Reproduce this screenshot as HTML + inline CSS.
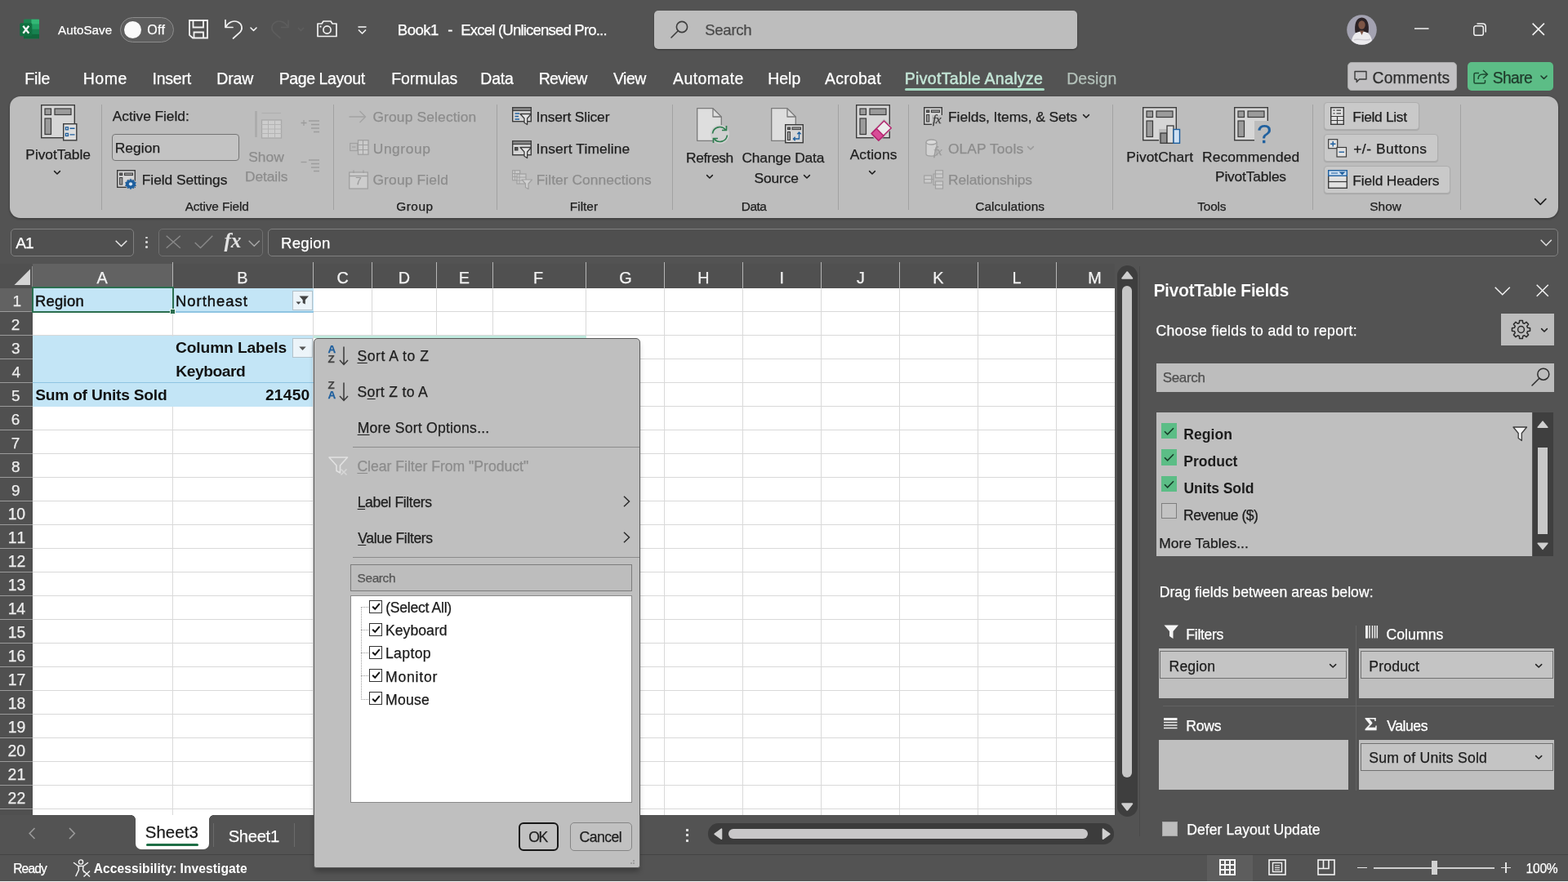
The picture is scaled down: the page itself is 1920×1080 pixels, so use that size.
<!DOCTYPE html>
<html lang="en">
<head>
<meta charset="utf-8">
<title>Book1 - Excel</title>
<style>
*{box-sizing:border-box;margin:0;padding:0}
html,body{width:1920px;height:1080px;overflow:hidden;background:#535353}
body{font-family:"Liberation Sans",sans-serif;color:#fff;position:relative;font-size:18px}
.t{position:absolute;white-space:pre;line-height:normal;-webkit-text-stroke:0.25px currentColor}
#app{position:absolute;left:0;top:0;width:1920px;height:1080px;will-change:transform}
.t u{text-decoration:underline;text-decoration-thickness:1px;text-underline-offset:2px}
svg{position:absolute;overflow:visible}
.sep{position:absolute;width:1px;background:#a2a2a2}
</style>
</head>
<body>
<div id="app">
<!-- p_title -->
<div id="titlebar">
<svg style="left:23px;top:23px;" width="26" height="26" viewBox="0 0 26 26">
<rect x="6" y="0.7" width="19" height="23.6" rx="1.8" fill="#1f9a5e"/>
<rect x="6" y="0.7" width="9.5" height="6" fill="#1c8451"/>
<rect x="15.5" y="0.7" width="9.5" height="6" fill="#33b876" />
<rect x="6" y="6.7" width="9.5" height="6" fill="#13703f"/>
<rect x="15.5" y="6.7" width="9.5" height="6" fill="#21a063"/>
<rect x="6" y="12.7" width="9.5" height="6" fill="#0e5a33"/>
<rect x="15.5" y="12.7" width="9.5" height="6" fill="#178150"/>
<rect x="6" y="18.7" width="19" height="5.6" fill="#10673c"/>
<rect x="1.300" y="5.300" width="15" height="16" rx="1.5" fill="#107040"/>
<path d="M5.300 8.800 L12.300 17.800 M12.300 8.800 L5.300 17.800" stroke="#f4f4f4" stroke-width="2.300" fill="none"/>
</svg>
<span class="t" style="left:70.97px;top:27.50px;font-size:15.2px;letter-spacing:0.041px;color:#ffffff;">AutoSave</span>
<div style="position:absolute;left:147px;top:21px;width:66px;height:30.5px;border:1.3px solid #8d8d8d;border-radius:16px;background:#5e5e5e"></div>
<div style="position:absolute;left:152px;top:25.5px;width:21px;height:21px;border-radius:50%;background:#fbfbfb"></div>
<span class="t" style="left:180.25px;top:27.80px;font-size:16px;letter-spacing:0.335px;color:#ffffff;">Off</span>
<svg style="left:231px;top:24px;" width="24" height="24" viewBox="0 0 24 24"><path d="M1 1 H23 V22.500 H5 L1 18.800 Z" fill="none" stroke="#f2f2f2" stroke-width="1.8" stroke-linejoin="miter"/>
<path d="M5.500 1 V9.500 H18 V1 M6.500 22.500 V15.500 H18 V22.500" fill="none" stroke="#f2f2f2" stroke-width="1.8"/></svg>
<svg style="left:274px;top:23px;" width="24" height="25" viewBox="0 0 24 25"><path d="M2 1.5 V10.5 H11" fill="none" stroke="#f2f2f2" stroke-width="1.7" stroke-linecap="round" stroke-linejoin="round"/>
<path d="M2.5 10 C6 4 12 1.5 17.5 4 C22.5 6.5 23.5 12.5 20 16.5 L11.5 24" fill="none" stroke="#f2f2f2" stroke-width="1.7" stroke-linecap="round"/></svg>
<svg style="left:306px;top:33px;" width="9" height="6" viewBox="0 0 9 6"><path d="M1 1 L4.5 4.5 L8 1" fill="none" stroke="#f2f2f2" stroke-width="1.6" stroke-linecap="round" stroke-linejoin="round"/></svg>
<svg style="left:331px;top:23px;" width="24" height="25" viewBox="0 0 24 25"><path d="M22 1.5 V10.5 H13" fill="none" stroke="#5d5d5d" stroke-width="1.7"/>
<path d="M21.5 10 C18 4 12 1.5 6.5 4 C1.5 6.5 0.5 12.5 4 16.5 L12.5 24" fill="none" stroke="#5d5d5d" stroke-width="1.7"/></svg>
<svg style="left:364px;top:33px;" width="9" height="6" viewBox="0 0 9 6"><path d="M1 1 L4.5 4.5 L8 1" fill="none" stroke="#5d5d5d" stroke-width="1.6"/></svg>
<svg style="left:388px;top:25px;" width="25" height="21" viewBox="0 0 25 21"><path d="M1 4 H6 L8 1 H17 L19 4 H24 V19.5 H1 Z" fill="none" stroke="#f2f2f2" stroke-width="1.7" stroke-linejoin="round"/>
<circle cx="12.5" cy="11.5" r="4.6" fill="none" stroke="#f2f2f2" stroke-width="1.7"/><rect x="3.5" y="6.5" width="2" height="2" fill="#f2f2f2"/></svg>
<svg style="left:438px;top:32px;" width="11" height="10" viewBox="0 0 11 10"><path d="M0.5 1 H10.5" stroke="#f2f2f2" stroke-width="1.6"/><path d="M1 4.5 L5.5 9 L10 4.5" fill="none" stroke="#f2f2f2" stroke-width="1.6" stroke-linejoin="round"/></svg>
<span class="t" style="left:486.77px;top:26.00px;font-size:18.6px;letter-spacing:-0.530px;color:#ffffff;">Book1</span>
<span class="t" style="left:548.18px;top:26.00px;font-size:18.6px;letter-spacing:0.000px;color:#ffffff;">-</span>
<span class="t" style="left:564.27px;top:26.00px;font-size:18.6px;letter-spacing:-0.829px;color:#ffffff;">Excel (Unlicensed Pro...</span>
<div style="position:absolute;left:801px;top:12.5px;width:517.5px;height:47.5px;background:#bdbdbd;border-radius:5px;box-shadow:0 1px 2px rgba(0,0,0,.35)"></div>
<svg style="left:821px;top:25px;" width="22" height="22" viewBox="0 0 22 22"><circle cx="14" cy="8" r="6.6" fill="none" stroke="#3d3d3d" stroke-width="1.6"/><path d="M9.3 12.7 L1 21" stroke="#3d3d3d" stroke-width="1.6" stroke-linecap="round"/></svg>
<span class="t" style="left:863.16px;top:26.00px;font-size:18.6px;letter-spacing:-0.281px;color:#4a4a4a;">Search</span>
<svg style="left:1649px;top:17.5px;" width="37" height="37" viewBox="0 0 37 37"><defs><clipPath id="av"><circle cx="18.5" cy="18.5" r="18.300"/></clipPath></defs>
<g clip-path="url(#av)"><rect width="37" height="37" fill="#a3a2b1"/>
<path d="M10.500 22 C9 12 11.500 3.500 18.500 3.500 C25.500 3.500 28 12 26.500 22 Z" fill="#2b2226"/>
<ellipse cx="18.500" cy="12.500" rx="4.200" ry="5.200" fill="#7d5546"/>
<path d="M5.500 37 C6 25 10.500 20.500 18.500 20.500 C26.500 20.500 31 25 31.500 37 Z" fill="#ecebee"/>
<path d="M16 19.500 L18.500 25 L21 19.500 Z" fill="#7d5546"/>
<path d="M9 31 C14 28.500 23 33 29 30" fill="none" stroke="#cfcdd4" stroke-width="1.500"/></g></svg>
<svg style="left:1731.5px;top:33.7px;" width="18" height="2" viewBox="0 0 18 2"><path d="M0 1 H17.5" stroke="#f2f2f2" stroke-width="1.5"/></svg>
<svg style="left:1804px;top:28px;" width="16" height="16" viewBox="0 0 16 16"><rect x="0.8" y="3.800" width="11.500" height="11.500" rx="2.300" fill="none" stroke="#f2f2f2" stroke-width="1.5"/><path d="M4.500 0.9 H11.500 Q15.200 0.9 15.200 4.600 V11.500" fill="none" stroke="#f2f2f2" stroke-width="1.5"/></svg>
<svg style="left:1876.3px;top:28.3px;" width="15.5" height="15.5" viewBox="0 0 15.5 15.5"><path d="M0.6 0.6 L14.900 14.900 M14.900 0.6 L0.6 14.900" stroke="#f2f2f2" stroke-width="1.6"/></svg>
</div>
<div id="tabs">
<span class="t" style="left:30.20px;top:84.50px;font-size:19.5px;letter-spacing:-0.087px;color:#ffffff;">File</span>
<span class="t" style="left:101.70px;top:84.50px;font-size:19.5px;letter-spacing:0.548px;color:#ffffff;">Home</span>
<span class="t" style="left:186.51px;top:84.50px;font-size:19.5px;letter-spacing:-0.228px;color:#ffffff;">Insert</span>
<span class="t" style="left:265.20px;top:84.50px;font-size:19.5px;letter-spacing:-0.087px;color:#ffffff;">Draw</span>
<span class="t" style="left:341.70px;top:84.50px;font-size:19.5px;letter-spacing:-0.407px;color:#ffffff;">Page Layout</span>
<span class="t" style="left:479.20px;top:84.50px;font-size:19.5px;letter-spacing:-0.038px;color:#ffffff;">Formulas</span>
<span class="t" style="left:588.20px;top:84.50px;font-size:19.5px;letter-spacing:-0.136px;color:#ffffff;">Data</span>
<span class="t" style="left:659.70px;top:84.50px;font-size:19.5px;letter-spacing:-0.839px;color:#ffffff;">Review</span>
<span class="t" style="left:750.92px;top:84.50px;font-size:19.5px;letter-spacing:-0.464px;color:#ffffff;">View</span>
<span class="t" style="left:823.96px;top:84.50px;font-size:19.5px;letter-spacing:0.419px;color:#ffffff;">Automate</span>
<span class="t" style="left:940.20px;top:84.50px;font-size:19.5px;letter-spacing:-0.001px;color:#ffffff;">Help</span>
<span class="t" style="left:1009.96px;top:84.50px;font-size:19.5px;letter-spacing:0.245px;color:#ffffff;">Acrobat</span>
<span class="t" style="left:1107.70px;top:84.50px;font-size:19.5px;letter-spacing:0.322px;color:#c3e5d6;-webkit-text-stroke:0.45px #c3e5d6;">PivotTable Analyze</span>
<div style="position:absolute;left:1108px;top:107.8px;width:171px;height:3px;background:#a6d8c1;border-radius:2px"></div>
<span class="t" style="left:1306.20px;top:84.50px;font-size:19.5px;letter-spacing:0.070px;color:#b3c0b9;">Design</span>
<div style="position:absolute;left:1650px;top:76.2px;width:134px;height:35.3px;background:#c2c1c3;border-radius:5px;border:1px solid #a9a9a9"></div>
<svg style="left:1658px;top:86px;" width="16" height="16" viewBox="0 0 16 16"><path d="M1 1.5 H15 V11 H6.5 L3.2 14.5 V11 H1 Z" fill="none" stroke="#3a3a3a" stroke-width="1.4" stroke-linejoin="round"/></svg>
<span class="t" style="left:1680.54px;top:84.50px;font-size:19.3px;letter-spacing:0.193px;color:#2e2e2e;">Comments</span>
<div style="position:absolute;left:1797px;top:76.2px;width:105px;height:35.3px;background:#5cbd86;border-radius:5px"></div>
<svg style="left:1804px;top:85px;" width="19" height="18" viewBox="0 0 19 18"><path d="M7 4.5 H2.5 Q1 4.500 1 6 V15.5 Q1 17 2.500 17 H13 Q14.5 17 14.5 15.5 V13" fill="none" stroke="#1d4a31" stroke-width="1.5"/><path d="M12 1 L17.5 6 L12 11 M17 6 H11.500 Q6 6 6 12" fill="none" stroke="#1d4a31" stroke-width="1.5" stroke-linejoin="round"/></svg>
<span class="t" style="left:1827.63px;top:84.50px;font-size:19.3px;letter-spacing:-0.570px;color:#1f3a2b;">Share</span>
<svg style="left:1886px;top:92px;" width="9" height="6" viewBox="0 0 9 6"><path d="M1 1 L4.5 4.5 L8 1" fill="none" stroke="#1f3a2b" stroke-width="1.6" stroke-linecap="round" stroke-linejoin="round"/></svg>
</div>
<!-- p_ribbon -->
<div id="ribbon">
<div style="position:absolute;left:12px;top:118px;width:1896px;height:149px;background:#bdbdbd;border-radius:13px;box-shadow:0 1px 3px rgba(0,0,0,.4)"></div>
<div class="sep" style="left:124px;top:128px;height:129px"></div>
<div class="sep" style="left:408px;top:128px;height:129px"></div>
<div class="sep" style="left:608px;top:128px;height:129px"></div>
<div class="sep" style="left:823px;top:128px;height:129px"></div>
<div class="sep" style="left:1026px;top:128px;height:129px"></div>
<div class="sep" style="left:1112px;top:128px;height:129px"></div>
<div class="sep" style="left:1362px;top:128px;height:129px"></div>
<div class="sep" style="left:1607px;top:128px;height:129px"></div>
<div class="sep" style="left:1788px;top:128px;height:129px"></div>
<svg style="left:50.3px;top:128.2px;opacity:1" width="42" height="41.5" viewBox="0 0 42 41.5"><rect x="0.7" y="0.7" width="40.6" height="40" fill="#d6d6d6" stroke="#3b3b3b" stroke-width="1.4"/>
<rect x="5" y="5" width="7.5" height="7.5" fill="#9b9b9b" stroke="#3b3b3b" stroke-width="1.2"/>
<rect x="17" y="5" width="20" height="7.500" fill="#9b9b9b" stroke="#3b3b3b" stroke-width="1.2"/>
<rect x="5" y="17" width="7.5" height="19.500" fill="#9b9b9b" stroke="#3b3b3b" stroke-width="1.2"/></svg>
<svg style="left:77.4px;top:150.8px;" width="17.5" height="21.5" viewBox="0 0 17.5 21.5"><rect x="0.7" y="0.7" width="16.1" height="20.1" fill="#dedede" stroke="#3b3b3b" stroke-width="1.4"/>
<rect x="3.4" y="4.8" width="3" height="3" fill="none" stroke="#1e5f9e" stroke-width="1.3"/><rect x="3.4" y="12.400" width="3" height="3" fill="none" stroke="#1e5f9e" stroke-width="1.3"/>
<path d="M8.5 6.3 H14.5 M8.5 13.9 H14.5" stroke="#1e5f9e" stroke-width="1.4"/></svg>
<span class="t" style="left:31.37px;top:178.50px;font-size:17.4px;letter-spacing:-0.076px;color:#1e1e1e;">PivotTable</span>
<svg style="left:66.2px;top:209.3px;" width="8" height="4.6" viewBox="0 0 8 4.6"><path d="M0.6 0.6 L4 4 L7.4 0.6" fill="none" stroke="#1e1e1e" stroke-width="1.5" stroke-linecap="round" stroke-linejoin="round"/></svg>
<span class="t" style="left:137.77px;top:132.00px;font-size:17.4px;letter-spacing:-0.063px;color:#1e1e1e;">Active Field:</span>
<div style="position:absolute;left:137px;top:164.3px;width:156px;height:32.4px;border:1px solid #747474;border-radius:4px;background:#c3c3c3"></div>
<span class="t" style="left:140.67px;top:171.00px;font-size:17.4px;letter-spacing:0.081px;color:#1e1e1e;">Region</span>
<svg style="left:143.3px;top:208.3px;" width="24" height="24" viewBox="0 0 24 24"><rect x="0.7" y="0.7" width="21.6" height="20.6" fill="#d6d6d6" stroke="#3b3b3b" stroke-width="1.4"/>
<rect x="3.6" y="4" width="3.2" height="2.600" fill="#666" stroke="#3b3b3b" stroke-width="1"/><rect x="9.5" y="4" width="10" height="2.6" fill="#999" stroke="#3b3b3b" stroke-width="1"/>
<rect x="3.6" y="9.5" width="3.2" height="8.5" fill="#999" stroke="#3b3b3b" stroke-width="1"/>
<circle cx="17" cy="17.3" r="6.8" fill="#bdbdbd"/>
<path d="M17 10.8 l1.6 1.9 2.4-.7 .6 2.400 2.300 .9 -1.100 2.200 1.100 2.200 -2.300 .9 -.600 2.400 -2.400-.7 -1.600 1.900 -1.600-1.900 -2.400 .7 -.600-2.400 -2.300-.900 1.100-2.200 -1.100-2.200 2.300-.900 .600-2.400 2.400 .7z" fill="#1e5f9e"/>
<circle cx="17" cy="17.3" r="2.1" fill="#d9e6f2"/></svg>
<span class="t" style="left:173.77px;top:210.00px;font-size:17.4px;letter-spacing:-0.059px;color:#1e1e1e;">Field Settings</span>
<span class="t" style="left:226.67px;top:243.50px;font-size:15.4px;letter-spacing:-0.134px;color:#1e1e1e;">Active Field</span>
<svg style="left:310px;top:134.5px;" width="36" height="40" viewBox="0 0 36 40"><path d="M3.5 1 V33" stroke="#a9a9a9" stroke-width="2.4"/>
<rect x="10.500" y="12" width="24" height="22" fill="#cdcdcd" stroke="#a9a9a9" stroke-width="1.3"/>
<path d="M10.5 17.5 H34.5 M10.5 23 H34.5 M10.5 28.5 H34.5 M18.500 12 V34 M26.500 12 V34" stroke="#b4b4b4" stroke-width="1"/>
<path d="M10.5 3.5 H34" stroke="#b0b0b0" stroke-width="1.2"/></svg>
<span class="t" style="left:304.22px;top:181.50px;font-size:17.4px;letter-spacing:0.003px;color:#8c8c8c;">Show</span>
<span class="t" style="left:300.07px;top:206.00px;font-size:17.4px;letter-spacing:-0.139px;color:#8c8c8c;">Details</span>
<svg style="left:368px;top:145.5px;" width="24" height="17" viewBox="0 0 24 17"><path d="M0.5 4.5 H7.5 M4 1 V8" stroke="#9d9d9d" stroke-width="1.3"/><path d="M10 2 H23 M13 6.500 H23 M13 11 H23 M16 15.500 H23" stroke="#9d9d9d" stroke-width="1.5"/></svg>
<svg style="left:368px;top:193.5px;" width="24" height="17" viewBox="0 0 24 17"><path d="M0.5 4.5 H7.5" stroke="#9d9d9d" stroke-width="1.3"/><path d="M10 2 H23 M13 6.500 H23 M13 11 H23 M16 15.500 H23" stroke="#9d9d9d" stroke-width="1.5"/></svg>
<svg style="left:426.5px;top:134.5px;" width="22" height="16" viewBox="0 0 22 16"><path d="M0.5 8 H20.5 M13.5 1 L20.5 8 L13.5 15" fill="none" stroke="#a3a3a3" stroke-width="1.4"/></svg>
<span class="t" style="left:456.43px;top:133.00px;font-size:17.4px;letter-spacing:0.151px;color:#8c8c8c;">Group Selection</span>
<svg style="left:427.5px;top:171px;" width="24" height="19" viewBox="0 0 24 19"><rect x="0.7" y="4.5" width="9" height="9" fill="none" stroke="#a0a0a0" stroke-width="1.2"/><path d="M3 9 H7.5" stroke="#a0a0a0" stroke-width="1.2"/>
<rect x="10.5" y="0.7" width="12.5" height="17.5" fill="#cbcbcb" stroke="#a0a0a0" stroke-width="1.3"/><path d="M10.5 6.500 H23 M10.5 12.500 H23 M16.5 0.7 V18" stroke="#a0a0a0" stroke-width="1.1"/></svg>
<span class="t" style="left:456.76px;top:172.00px;font-size:17.4px;letter-spacing:0.568px;color:#8c8c8c;">Ungroup</span>
<svg style="left:427px;top:208px;" width="24" height="24" viewBox="0 0 24 24"><rect x="0.7" y="3" width="22.6" height="20" fill="#cdcdcd" stroke="#a0a0a0" stroke-width="1.3"/><path d="M0.7 7.500 H23.3 M6 0.5 V4 M18 0.5 V4" stroke="#a0a0a0" stroke-width="1.3"/></svg>
<span class="t" style="left:435.31px;top:214.00px;font-size:13.5px;letter-spacing:0.000px;color:#9c9c9c;">7</span>
<span class="t" style="left:456.43px;top:210.00px;font-size:17.4px;letter-spacing:0.158px;color:#8c8c8c;">Group Field</span>
<span class="t" style="left:485.23px;top:243.50px;font-size:15.4px;letter-spacing:0.526px;color:#1e1e1e;">Group</span>
<svg style="left:627.3px;top:130.7px;" width="24" height="23" viewBox="0 0 24 23"><rect x="0.7" y="0.7" width="22.6" height="17" fill="#d6d6d6" stroke="#3b3b3b" stroke-width="1.4"/><rect x="0.7" y="0.7" width="22.6" height="3.800" fill="#8a8a8a" stroke="#3b3b3b" stroke-width="1.2"/><path d="M3.5 8 H9 M3.5 11.5 H8 M3.5 15 H9" stroke="#1e5f9e" stroke-width="1.4"/><path d="M10 8.5 H23.5 L18.600 14 V21.5 L15 19.300 V14 Z" fill="#e6e6e6" stroke="#3b3b3b" stroke-width="1.3" stroke-linejoin="round"/></svg>
<span class="t" style="left:656.50px;top:133.00px;font-size:17.4px;letter-spacing:-0.157px;color:#1e1e1e;">Insert Slicer</span>
<svg style="left:627.3px;top:171.5px;" width="24" height="23" viewBox="0 0 24 23"><rect x="0.7" y="0.7" width="22.6" height="17" fill="#d6d6d6" stroke="#3b3b3b" stroke-width="1.4"/><rect x="0.7" y="0.7" width="22.6" height="3.800" fill="#8a8a8a" stroke="#3b3b3b" stroke-width="1.2"/><rect x="3.5" y="8.5" width="3.5" height="3.500" fill="#555" stroke="#3b3b3b" stroke-width="1"/><path d="M10 8.5 H23.5 L18.600 14 V21.5 L15 19.300 V14 Z" fill="#e6e6e6" stroke="#3b3b3b" stroke-width="1.3" stroke-linejoin="round"/></svg>
<span class="t" style="left:656.50px;top:172.00px;font-size:17.4px;letter-spacing:0.116px;color:#1e1e1e;">Insert Timeline</span>
<svg style="left:627px;top:208px;" width="25" height="24" viewBox="0 0 25 24"><rect x="0.7" y="0.7" width="9" height="12" fill="#cbcbcb" stroke="#a0a0a0" stroke-width="1.2"/><rect x="6" y="5" width="11" height="12" fill="#cbcbcb" stroke="#a0a0a0" stroke-width="1.2"/><path d="M3.5 0.7 V12.500 M0.7 4.500 H9.7 M0.7 8.500 H6 M9 5 V17 M6 9 H17 M6 13 H12" stroke="#a0a0a0" stroke-width="1"/>
<path d="M12 12 H24.500 L20 17 V23.5 L16.500 21.5 V17 Z" fill="#d0d0d0" stroke="#a0a0a0" stroke-width="1.2" stroke-linejoin="round"/></svg>
<span class="t" style="left:656.67px;top:210.00px;font-size:17.4px;letter-spacing:0.054px;color:#8c8c8c;">Filter Connections</span>
<span class="t" style="left:697.84px;top:243.50px;font-size:15.4px;letter-spacing:-0.002px;color:#1e1e1e;">Filter</span>
<svg style="left:852.5px;top:131.7px;" width="31" height="41" viewBox="0 0 31 41"><path d="M0.7 0.7 H20 L30.3 11 V40.3 H0.7 Z" fill="#dedede" stroke="#7a7a7a" stroke-width="1.3" stroke-linejoin="round"/><path d="M20 0.7 V11 H30.3" fill="none" stroke="#7a7a7a" stroke-width="1.3" stroke-linejoin="round"/></svg>
<svg style="left:869px;top:153px;" width="25" height="23" viewBox="0 0 25 23"><circle cx="12.5" cy="11.5" r="11.5" fill="#d0d0d0"/>
<path d="M3.5 10.5 A9 9 0 0 1 19.500 6 M21.500 12.500 A9 9 0 0 1 5.500 17" fill="none" stroke="#2e7d4f" stroke-width="1.7"/>
<path d="M20.5 1 V6.500 H15 M4.500 22 V16.500 H10" fill="none" stroke="#2e7d4f" stroke-width="1.7"/></svg>
<span class="t" style="left:840.07px;top:183.40px;font-size:17.4px;letter-spacing:-0.447px;color:#1e1e1e;">Refresh</span>
<svg style="left:865px;top:214.3px;" width="8" height="4.6" viewBox="0 0 8 4.6"><path d="M0.6 0.6 L4 4 L7.4 0.6" fill="none" stroke="#1e1e1e" stroke-width="1.5" stroke-linecap="round" stroke-linejoin="round"/></svg>
<svg style="left:944px;top:131.7px;" width="31" height="41" viewBox="0 0 31 41"><path d="M0.7 0.7 H20 L30.3 11 V40.3 H0.7 Z" fill="#dedede" stroke="#7a7a7a" stroke-width="1.3" stroke-linejoin="round"/><path d="M20 0.7 V11 H30.3" fill="none" stroke="#7a7a7a" stroke-width="1.3" stroke-linejoin="round"/></svg>
<svg style="left:961px;top:152px;" width="23" height="23.5" viewBox="0 0 23 23.5"><rect x="0.7" y="0.7" width="21.6" height="22" fill="#d6d6d6" stroke="#3b3b3b" stroke-width="1.4"/>
<rect x="3.5" y="4" width="3" height="2.600" fill="#666" stroke="#3b3b3b" stroke-width="1"/><rect x="9" y="4" width="10.500" height="2.6" fill="#999" stroke="#3b3b3b" stroke-width="1"/>
<rect x="3.5" y="9.5" width="3" height="10" fill="#999" stroke="#3b3b3b" stroke-width="1"/>
<path d="M17.500 10 V18 H10.500 M15.300 12.200 L17.500 10 L19.700 12.200 M12.700 15.800 L10.500 18 L12.700 20.200" fill="none" stroke="#1e5f9e" stroke-width="1.3"/></svg>
<span class="t" style="left:908.43px;top:183.40px;font-size:17.4px;letter-spacing:-0.148px;color:#1e1e1e;">Change Data</span>
<span class="t" style="left:923.52px;top:207.50px;font-size:17.4px;letter-spacing:-0.136px;color:#1e1e1e;">Source</span>
<svg style="left:984.3px;top:214.3px;" width="8" height="4.6" viewBox="0 0 8 4.6"><path d="M0.6 0.6 L4 4 L7.4 0.6" fill="none" stroke="#1e1e1e" stroke-width="1.5" stroke-linecap="round" stroke-linejoin="round"/></svg>
<span class="t" style="left:907.84px;top:243.50px;font-size:15.4px;letter-spacing:-0.527px;color:#1e1e1e;">Data</span>
<svg style="left:1048px;top:128.2px;opacity:1" width="42" height="41.5" viewBox="0 0 42 41.5"><rect x="0.7" y="0.7" width="40.6" height="40" fill="#d6d6d6" stroke="#3b3b3b" stroke-width="1.4"/>
<rect x="5" y="5" width="7.5" height="7.5" fill="#9b9b9b" stroke="#3b3b3b" stroke-width="1.2"/>
<rect x="17" y="5" width="20" height="7.500" fill="#9b9b9b" stroke="#3b3b3b" stroke-width="1.2"/>
<rect x="5" y="17" width="7.5" height="19.500" fill="#9b9b9b" stroke="#3b3b3b" stroke-width="1.2"/></svg>
<svg style="left:1064.5px;top:144.5px;" width="29" height="29" viewBox="0 0 29 29"><path d="M0.5 18.500 L17.500 0.5 L28.500 11.500 L11.500 28.500 H8.500 Z" fill="#bdbdbd"/>
<path d="M2.300 18.500 L17.500 3 L26.300 11.800 L10.800 27 Z" fill="#ececec" stroke="#b3266f" stroke-width="1.5" stroke-linejoin="round"/>
<path d="M2.300 18.500 L8.300 12.500 L17 21.200 L10.800 27 Z" fill="#d84c97" stroke="#b3266f" stroke-width="1.5" stroke-linejoin="round"/></svg>
<span class="t" style="left:1040.67px;top:178.50px;font-size:17.4px;letter-spacing:0.117px;color:#1e1e1e;">Actions</span>
<svg style="left:1064.3px;top:209.3px;" width="8" height="4.6" viewBox="0 0 8 4.6"><path d="M0.6 0.6 L4 4 L7.4 0.6" fill="none" stroke="#1e1e1e" stroke-width="1.5" stroke-linecap="round" stroke-linejoin="round"/></svg>
<svg style="left:1131px;top:130.7px;" width="24" height="23" viewBox="0 0 24 23"><rect x="0.7" y="0.7" width="21.6" height="20.6" fill="#d6d6d6" stroke="#3b3b3b" stroke-width="1.4"/>
<rect x="3.6" y="4" width="3.2" height="2.600" fill="#666" stroke="#3b3b3b" stroke-width="1"/><rect x="9.5" y="4" width="10" height="2.6" fill="#999" stroke="#3b3b3b" stroke-width="1"/>
<rect x="3.6" y="9.5" width="3.2" height="8.5" fill="#999" stroke="#3b3b3b" stroke-width="1"/><rect x="10" y="10" width="15" height="14" fill="#bdbdbd"/></svg>
<span class="t" style="left:1142px;top:137px;font-family:'Liberation Serif',serif;font-style:italic;font-size:15.5px;color:#3b3b3b;letter-spacing:-0.5px">fx</span>
<span class="t" style="left:1161.07px;top:133.00px;font-size:17.4px;letter-spacing:-0.075px;color:#1e1e1e;">Fields, Items, &amp; Sets</span>
<svg style="left:1326px;top:140px;" width="8" height="4.6" viewBox="0 0 8 4.6"><path d="M0.6 0.6 L4 4 L7.4 0.6" fill="none" stroke="#1e1e1e" stroke-width="1.5" stroke-linecap="round" stroke-linejoin="round"/></svg>
<svg style="left:1133px;top:170px;" width="22" height="23" viewBox="0 0 22 23"><path d="M1 4 V18.500 C1 22 14 22 14 18.500 V4" fill="#d2d2d2" stroke="#a0a0a0" stroke-width="1.3"/><ellipse cx="7.5" cy="4" rx="6.500" ry="3" fill="#d9d9d9" stroke="#a0a0a0" stroke-width="1.3"/></svg>
<span class="t" style="left:1143px;top:176px;font-family:'Liberation Serif',serif;font-style:italic;font-size:15.5px;color:#9a9a9a;letter-spacing:-0.5px">fx</span>
<span class="t" style="left:1160.88px;top:172.00px;font-size:17.4px;letter-spacing:0.111px;color:#8c8c8c;">OLAP Tools</span>
<svg style="left:1257.5px;top:179px;" width="8" height="4.6" viewBox="0 0 8 4.6"><path d="M0.6 0.6 L4 4 L7.4 0.6" fill="none" stroke="#9a9a9a" stroke-width="1.5" stroke-linecap="round" stroke-linejoin="round"/></svg>
<svg style="left:1131px;top:208px;" width="24" height="24" viewBox="0 0 24 24"><rect x="0.7" y="7" width="9" height="9" fill="#cbcbcb" stroke="#a0a0a0" stroke-width="1.2"/><path d="M0.7 11.500 H9.7"  stroke="#a0a0a0" stroke-width="1"/>
<rect x="14.500" y="0.7" width="9" height="9" fill="#cbcbcb" stroke="#a0a0a0" stroke-width="1.2"/><rect x="14.500" y="14" width="9" height="9" fill="#cbcbcb" stroke="#a0a0a0" stroke-width="1.2"/>
<path d="M14.500 5 H23.500 M14.500 18.500 H23.500 M9.700 11.500 H12 V5 H14.500 M12 11.500 V18.500 H14.500" fill="none" stroke="#a0a0a0" stroke-width="1.1"/></svg>
<span class="t" style="left:1161.07px;top:210.00px;font-size:17.4px;letter-spacing:-0.117px;color:#8c8c8c;">Relationships</span>
<span class="t" style="left:1194.23px;top:243.50px;font-size:15.4px;letter-spacing:0.085px;color:#1e1e1e;">Calculations</span>
<svg style="left:1399px;top:130.5px;opacity:1" width="42" height="41.5" viewBox="0 0 42 41.5"><rect x="0.7" y="0.7" width="40.6" height="40" fill="#d6d6d6" stroke="#3b3b3b" stroke-width="1.4"/>
<rect x="5" y="5" width="7.5" height="7.5" fill="#9b9b9b" stroke="#3b3b3b" stroke-width="1.2"/>
<rect x="17" y="5" width="20" height="7.500" fill="#9b9b9b" stroke="#3b3b3b" stroke-width="1.2"/>
<rect x="5" y="17" width="7.5" height="19.500" fill="#9b9b9b" stroke="#3b3b3b" stroke-width="1.2"/></svg>
<svg style="left:1418.5px;top:151.5px;" width="27" height="24" viewBox="0 0 27 24"><rect x="0" y="6" width="27" height="18" fill="#bdbdbd"/><rect x="2" y="11" width="8" height="12.300" fill="#8f8f8f" stroke="#3b3b3b" stroke-width="1.3"/>
<rect x="10" y="2" width="8" height="21.3" fill="#dcdcdc" stroke="#3b3b3b" stroke-width="1.3"/><rect x="18" y="6.500" width="7.500" height="16.800" fill="#cfe1f3" stroke="#1e5f9e" stroke-width="1.4"/></svg>
<span class="t" style="left:1379.37px;top:181.50px;font-size:17.4px;letter-spacing:0.046px;color:#1e1e1e;">PivotChart</span>
<svg style="left:1510.8px;top:130.5px;opacity:1" width="42" height="41.5" viewBox="0 0 42 41.5"><rect x="0.7" y="0.7" width="40.6" height="40" fill="#d6d6d6" stroke="#3b3b3b" stroke-width="1.4"/>
<rect x="5" y="5" width="7.5" height="7.5" fill="#9b9b9b" stroke="#3b3b3b" stroke-width="1.2"/>
<rect x="17" y="5" width="20" height="7.500" fill="#9b9b9b" stroke="#3b3b3b" stroke-width="1.2"/>
<rect x="5" y="17" width="7.5" height="19.500" fill="#9b9b9b" stroke="#3b3b3b" stroke-width="1.2"/></svg>
<div style="position:absolute;left:1536px;top:148px;width:22px;height:30px;background:#bdbdbd"></div>
<span class="t" style="left:1539.19px;top:146.00px;font-size:32px;letter-spacing:0.000px;color:#1e5f9e;">?</span>
<span class="t" style="left:1472.07px;top:181.50px;font-size:17.4px;letter-spacing:0.115px;color:#1e1e1e;">Recommended</span>
<span class="t" style="left:1487.97px;top:205.50px;font-size:17.4px;letter-spacing:-0.183px;color:#1e1e1e;">PivotTables</span>
<span class="t" style="left:1466.36px;top:243.50px;font-size:15.4px;letter-spacing:-0.214px;color:#1e1e1e;">Tools</span>
<div style="position:absolute;left:1620.7px;top:125px;width:116.9px;height:34px;background:#c9c9c9;border:1px solid #adadad;border-radius:4px;box-shadow:0 1px 1px rgba(0,0,0,.12)"></div>
<div style="position:absolute;left:1620.7px;top:164px;width:139.9px;height:34px;background:#c9c9c9;border:1px solid #adadad;border-radius:4px;box-shadow:0 1px 1px rgba(0,0,0,.12)"></div>
<div style="position:absolute;left:1620.7px;top:203px;width:155.3px;height:34px;background:#c9c9c9;border:1px solid #adadad;border-radius:4px;box-shadow:0 1px 1px rgba(0,0,0,.12)"></div>
<svg style="left:1629px;top:131px;" width="17" height="22" viewBox="0 0 17 22"><rect x="0.7" y="0.7" width="15.6" height="20.6" fill="#e2e2e2" stroke="#3b3b3b" stroke-width="1.4"/><path d="M0.7 11.500 H16.3 M0.7 16.500 H16.3 M8.5 11.500 V21.3" stroke="#3b3b3b" stroke-width="1.2"/><path d="M3.500 4.200 H5.500 M7.500 4.200 H13 M3.500 7.800 H5.500 M7.500 7.800 H13" stroke="#3b3b3b" stroke-width="1.2"/></svg>
<span class="t" style="left:1656.37px;top:133.00px;font-size:17.4px;letter-spacing:-0.331px;color:#1e1e1e;">Field List</span>
<svg style="left:1626px;top:170px;" width="24" height="23" viewBox="0 0 24 23"><rect x="0.7" y="0.7" width="11" height="11" fill="#e2e2e2" stroke="#3b3b3b" stroke-width="1.2"/><path d="M3 6.200 H9.500 M6.200 3 V9.500" stroke="#1e5f9e" stroke-width="1.4"/>
<rect x="11" y="10.500" width="11.500" height="11.500" fill="#e2e2e2" stroke="#3b3b3b" stroke-width="1.2"/><path d="M13.500 16.200 H20" stroke="#1e5f9e" stroke-width="1.4"/></svg>
<span class="t" style="left:1657.16px;top:172.00px;font-size:17.4px;letter-spacing:0.533px;color:#1e1e1e;">+/- Buttons</span>
<svg style="left:1626px;top:208px;" width="24" height="23" viewBox="0 0 24 23"><rect x="0.7" y="0.7" width="22.6" height="21.6" fill="#e2e2e2" stroke="#3b3b3b" stroke-width="1.4"/><rect x="0.7" y="0.7" width="22.6" height="6.500" fill="#cfe1f3" stroke="#1e5f9e" stroke-width="1.4"/><path d="M0.7 14.500 H23.3" stroke="#3b3b3b" stroke-width="1.2"/><path d="M4 4 H12 M15 3 L17.500 5.500 L20 3 Z" stroke="#1e5f9e" stroke-width="1.2" fill="#1e5f9e"/></svg>
<span class="t" style="left:1656.37px;top:211.00px;font-size:17.4px;letter-spacing:-0.180px;color:#1e1e1e;">Field Headers</span>
<span class="t" style="left:1677.31px;top:243.50px;font-size:15.4px;letter-spacing:0.009px;color:#1e1e1e;">Show</span>
<svg style="left:1879.3px;top:243px;" width="14.5" height="8" viewBox="0 0 14.5 8"><path d="M0.6 0.6 L7.25 7.4 L13.9 0.6" fill="none" stroke="#1e1e1e" stroke-width="1.6" stroke-linecap="round" stroke-linejoin="round"/></svg>
</div>
<!-- p_grid -->
<div id="formulabar">
<div style="position:absolute;left:12.5px;top:279.5px;width:151px;height:34px;border:1px solid #808080;border-radius:5px;background:#505050"></div>
<span class="t" style="left:19.16px;top:287.00px;font-size:19.2px;letter-spacing:-1.022px;color:#fff;">A1</span>
<svg style="left:140.5px;top:294px;" width="15" height="8.5" viewBox="0 0 15 8.5"><path d="M0.7 0.7 L7.5 7.5 L14.3 0.7" fill="none" stroke="#e8e8e8" stroke-width="1.5"/></svg>
<div style="position:absolute;left:178px;top:289.5px;width:2.8px;height:2.7px;background:#d8d8d8;border-radius:50%"></div>
<div style="position:absolute;left:178px;top:295.2px;width:2.8px;height:2.7px;background:#d8d8d8;border-radius:50%"></div>
<div style="position:absolute;left:178px;top:301px;width:2.8px;height:2.7px;background:#d8d8d8;border-radius:50%"></div>
<div style="position:absolute;left:194px;top:279.5px;width:128px;height:34px;border:1px solid #707070;border-radius:5px;background:#525252"></div>
<svg style="left:203px;top:288.3px;" width="18.5" height="16.5" viewBox="0 0 18.5 16.5"><path d="M0.7 0.7 L17.800 15.800 M17.800 0.7 L0.7 15.800" stroke="#8a8a8a" stroke-width="1.4"/></svg>
<svg style="left:237.5px;top:288.3px;" width="23" height="16.5" viewBox="0 0 23 16.5"><path d="M0.7 9 L7.500 15.500 L22.300 0.7" fill="none" stroke="#8a8a8a" stroke-width="1.4"/></svg>
<span class="t" style="left:274.5px;top:280px;font-family:'Liberation Serif',serif;font-style:italic;font-weight:bold;font-size:25.5px;color:#e2e2e2;letter-spacing:-0.3px;-webkit-text-stroke:0">fx</span>
<svg style="left:304.2px;top:294px;" width="14.5" height="8" viewBox="0 0 14.5 8"><path d="M0.7 0.7 L7.250 7.300 L13.800 0.7" fill="none" stroke="#a8a8a8" stroke-width="1.4"/></svg>
<div style="position:absolute;left:328px;top:279.5px;width:1580px;height:34px;border:1px solid #808080;border-radius:5px;background:#4f4f4f"></div>
<span class="t" style="left:344.07px;top:287.00px;font-size:18.6px;letter-spacing:0.255px;color:#fff;">Region</span>
<svg style="left:1886px;top:292.5px;" width="14.5" height="8.5" viewBox="0 0 14.5 8.5"><path d="M0.7 0.7 L7.250 7.500 L13.800 0.7" fill="none" stroke="#e0e0e0" stroke-width="1.5"/></svg>
</div>
<div id="grid">
<div style="position:absolute;left:39px;top:352.5px;width:1325.5px;height:645px;background:#ffffff"></div>
<div style="position:absolute;left:0px;top:323px;width:1364.5px;height:29.5px;background:#505050"></div>
<div style="position:absolute;left:0px;top:352.5px;width:39.5px;height:645px;background:#505050"></div>
<div style="position:absolute;left:39.5px;top:323px;width:172px;height:28px;background:#626262"></div>
<div style="position:absolute;left:0px;top:353px;width:39px;height:29px;background:#626262"></div>
<svg style="left:16.5px;top:328.5px;" width="20.5" height="20.5" viewBox="0 0 20.5 20.5"><path d="M20 0.5 V20 H0.5 Z" fill="#d4d4d4"/></svg>
<div style="position:absolute;left:39.5px;top:353px;width:344px;height:29px;background:#c3e5f6"></div>
<div style="position:absolute;left:39.5px;top:411px;width:344px;height:87px;background:#c3e5f6"></div>
<div style="position:absolute;left:39.5px;top:381px;width:1325px;height:1px;background:#d9d9d9"></div>
<div style="position:absolute;left:0px;top:381px;width:39.5px;height:1px;background:#9a9a9a"></div>
<div style="position:absolute;left:39.5px;top:410px;width:1325px;height:1px;background:#d9d9d9"></div>
<div style="position:absolute;left:0px;top:410px;width:39.5px;height:1px;background:#9a9a9a"></div>
<div style="position:absolute;left:39.5px;top:439px;width:1325px;height:1px;background:#d9d9d9"></div>
<div style="position:absolute;left:0px;top:439px;width:39.5px;height:1px;background:#9a9a9a"></div>
<div style="position:absolute;left:39.5px;top:468px;width:1325px;height:1px;background:#d9d9d9"></div>
<div style="position:absolute;left:0px;top:468px;width:39.5px;height:1px;background:#9a9a9a"></div>
<div style="position:absolute;left:39.5px;top:497px;width:1325px;height:1px;background:#d9d9d9"></div>
<div style="position:absolute;left:0px;top:497px;width:39.5px;height:1px;background:#9a9a9a"></div>
<div style="position:absolute;left:39.5px;top:526px;width:1325px;height:1px;background:#d9d9d9"></div>
<div style="position:absolute;left:0px;top:526px;width:39.5px;height:1px;background:#9a9a9a"></div>
<div style="position:absolute;left:39.5px;top:555px;width:1325px;height:1px;background:#d9d9d9"></div>
<div style="position:absolute;left:0px;top:555px;width:39.5px;height:1px;background:#9a9a9a"></div>
<div style="position:absolute;left:39.5px;top:584px;width:1325px;height:1px;background:#d9d9d9"></div>
<div style="position:absolute;left:0px;top:584px;width:39.5px;height:1px;background:#9a9a9a"></div>
<div style="position:absolute;left:39.5px;top:613px;width:1325px;height:1px;background:#d9d9d9"></div>
<div style="position:absolute;left:0px;top:613px;width:39.5px;height:1px;background:#9a9a9a"></div>
<div style="position:absolute;left:39.5px;top:642px;width:1325px;height:1px;background:#d9d9d9"></div>
<div style="position:absolute;left:0px;top:642px;width:39.5px;height:1px;background:#9a9a9a"></div>
<div style="position:absolute;left:39.5px;top:671px;width:1325px;height:1px;background:#d9d9d9"></div>
<div style="position:absolute;left:0px;top:671px;width:39.5px;height:1px;background:#9a9a9a"></div>
<div style="position:absolute;left:39.5px;top:700px;width:1325px;height:1px;background:#d9d9d9"></div>
<div style="position:absolute;left:0px;top:700px;width:39.5px;height:1px;background:#9a9a9a"></div>
<div style="position:absolute;left:39.5px;top:729px;width:1325px;height:1px;background:#d9d9d9"></div>
<div style="position:absolute;left:0px;top:729px;width:39.5px;height:1px;background:#9a9a9a"></div>
<div style="position:absolute;left:39.5px;top:758px;width:1325px;height:1px;background:#d9d9d9"></div>
<div style="position:absolute;left:0px;top:758px;width:39.5px;height:1px;background:#9a9a9a"></div>
<div style="position:absolute;left:39.5px;top:787px;width:1325px;height:1px;background:#d9d9d9"></div>
<div style="position:absolute;left:0px;top:787px;width:39.5px;height:1px;background:#9a9a9a"></div>
<div style="position:absolute;left:39.5px;top:816px;width:1325px;height:1px;background:#d9d9d9"></div>
<div style="position:absolute;left:0px;top:816px;width:39.5px;height:1px;background:#9a9a9a"></div>
<div style="position:absolute;left:39.5px;top:845px;width:1325px;height:1px;background:#d9d9d9"></div>
<div style="position:absolute;left:0px;top:845px;width:39.5px;height:1px;background:#9a9a9a"></div>
<div style="position:absolute;left:39.5px;top:874px;width:1325px;height:1px;background:#d9d9d9"></div>
<div style="position:absolute;left:0px;top:874px;width:39.5px;height:1px;background:#9a9a9a"></div>
<div style="position:absolute;left:39.5px;top:903px;width:1325px;height:1px;background:#d9d9d9"></div>
<div style="position:absolute;left:0px;top:903px;width:39.5px;height:1px;background:#9a9a9a"></div>
<div style="position:absolute;left:39.5px;top:932px;width:1325px;height:1px;background:#d9d9d9"></div>
<div style="position:absolute;left:0px;top:932px;width:39.5px;height:1px;background:#9a9a9a"></div>
<div style="position:absolute;left:39.5px;top:961px;width:1325px;height:1px;background:#d9d9d9"></div>
<div style="position:absolute;left:0px;top:961px;width:39.5px;height:1px;background:#9a9a9a"></div>
<div style="position:absolute;left:39.5px;top:990px;width:1325px;height:1px;background:#d9d9d9"></div>
<div style="position:absolute;left:0px;top:990px;width:39.5px;height:1px;background:#9a9a9a"></div>
<div style="position:absolute;left:211px;top:352.5px;width:1px;height:645px;background:#d9d9d9"></div>
<div style="position:absolute;left:211px;top:321px;width:1px;height:31.5px;background:#b5b5b5"></div>
<div style="position:absolute;left:383px;top:352.5px;width:1px;height:645px;background:#d9d9d9"></div>
<div style="position:absolute;left:383px;top:321px;width:1px;height:31.5px;background:#b5b5b5"></div>
<div style="position:absolute;left:455px;top:352.5px;width:1px;height:645px;background:#d9d9d9"></div>
<div style="position:absolute;left:455px;top:321px;width:1px;height:31.5px;background:#b5b5b5"></div>
<div style="position:absolute;left:534px;top:352.5px;width:1px;height:645px;background:#d9d9d9"></div>
<div style="position:absolute;left:534px;top:321px;width:1px;height:31.5px;background:#b5b5b5"></div>
<div style="position:absolute;left:603px;top:352.5px;width:1px;height:645px;background:#d9d9d9"></div>
<div style="position:absolute;left:603px;top:321px;width:1px;height:31.5px;background:#b5b5b5"></div>
<div style="position:absolute;left:717px;top:352.5px;width:1px;height:645px;background:#d9d9d9"></div>
<div style="position:absolute;left:717px;top:321px;width:1px;height:31.5px;background:#b5b5b5"></div>
<div style="position:absolute;left:813px;top:352.5px;width:1px;height:645px;background:#d9d9d9"></div>
<div style="position:absolute;left:813px;top:321px;width:1px;height:31.5px;background:#b5b5b5"></div>
<div style="position:absolute;left:909px;top:352.5px;width:1px;height:645px;background:#d9d9d9"></div>
<div style="position:absolute;left:909px;top:321px;width:1px;height:31.5px;background:#b5b5b5"></div>
<div style="position:absolute;left:1005px;top:352.5px;width:1px;height:645px;background:#d9d9d9"></div>
<div style="position:absolute;left:1005px;top:321px;width:1px;height:31.5px;background:#b5b5b5"></div>
<div style="position:absolute;left:1101px;top:352.5px;width:1px;height:645px;background:#d9d9d9"></div>
<div style="position:absolute;left:1101px;top:321px;width:1px;height:31.5px;background:#b5b5b5"></div>
<div style="position:absolute;left:1197px;top:352.5px;width:1px;height:645px;background:#d9d9d9"></div>
<div style="position:absolute;left:1197px;top:321px;width:1px;height:31.5px;background:#b5b5b5"></div>
<div style="position:absolute;left:1293px;top:352.5px;width:1px;height:645px;background:#d9d9d9"></div>
<div style="position:absolute;left:1293px;top:321px;width:1px;height:31.5px;background:#b5b5b5"></div>
<div style="position:absolute;left:39px;top:326px;width:1px;height:26.5px;background:#8a8a8a"></div>
<div style="position:absolute;left:40px;top:411.5px;width:343px;height:86px;background:#c3e5f6"></div>
<div style="position:absolute;left:211.5px;top:353px;width:172px;height:28.5px;background:#c3e5f6"></div>
<div style="position:absolute;left:211.5px;top:381px;width:172px;height:1.5px;background:#8fc4e2"></div>
<div style="position:absolute;left:39.5px;top:468px;width:344px;height:1.3px;background:#8fc4e2"></div>
<div style="position:absolute;left:39px;top:350.5px;width:174px;height:32.5px;border:2px solid #2b6e4f;background:#c3e5f6"></div>
<div style="position:absolute;left:208px;top:378px;width:6.5px;height:6.5px;background:#2b6e4f;border:1px solid #e8f4f0"></div>
<span class="t" style="left:118.46px;top:329.00px;font-size:19.8px;letter-spacing:0.000px;color:#f2f2f2;">A</span>
<span class="t" style="left:290.28px;top:329.00px;font-size:19.8px;letter-spacing:0.000px;color:#f2f2f2;">B</span>
<span class="t" style="left:412.51px;top:329.00px;font-size:19.8px;letter-spacing:0.000px;color:#f2f2f2;">C</span>
<span class="t" style="left:487.78px;top:329.00px;font-size:19.8px;letter-spacing:0.000px;color:#f2f2f2;">D</span>
<span class="t" style="left:561.78px;top:329.00px;font-size:19.8px;letter-spacing:0.000px;color:#f2f2f2;">E</span>
<span class="t" style="left:653.03px;top:329.00px;font-size:19.8px;letter-spacing:0.000px;color:#f2f2f2;">F</span>
<span class="t" style="left:758.26px;top:329.00px;font-size:19.8px;letter-spacing:0.000px;color:#f2f2f2;">G</span>
<span class="t" style="left:854.28px;top:329.00px;font-size:19.8px;letter-spacing:0.000px;color:#f2f2f2;">H</span>
<span class="t" style="left:954.58px;top:329.00px;font-size:19.8px;letter-spacing:0.000px;color:#f2f2f2;">I</span>
<span class="t" style="left:1048.95px;top:329.00px;font-size:19.8px;letter-spacing:0.000px;color:#f2f2f2;">J</span>
<span class="t" style="left:1142.28px;top:329.00px;font-size:19.8px;letter-spacing:0.000px;color:#f2f2f2;">K</span>
<span class="t" style="left:1239.53px;top:329.00px;font-size:19.8px;letter-spacing:0.000px;color:#f2f2f2;">L</span>
<span class="t" style="left:1332.28px;top:329.00px;font-size:19.8px;letter-spacing:0.000px;color:#f2f2f2;">M</span>
<span class="t" style="left:15.56px;top:358.00px;font-size:19px;letter-spacing:0.000px;color:#ededed;">1</span>
<span class="t" style="left:13.85px;top:387.00px;font-size:19px;letter-spacing:0.000px;color:#ededed;">2</span>
<span class="t" style="left:14.08px;top:416.00px;font-size:19px;letter-spacing:0.000px;color:#ededed;">3</span>
<span class="t" style="left:14.38px;top:445.00px;font-size:19px;letter-spacing:0.000px;color:#ededed;">4</span>
<span class="t" style="left:14.04px;top:474.00px;font-size:19px;letter-spacing:0.000px;color:#ededed;">5</span>
<span class="t" style="left:13.85px;top:503.00px;font-size:19px;letter-spacing:0.000px;color:#ededed;">6</span>
<span class="t" style="left:13.83px;top:532.00px;font-size:19px;letter-spacing:0.000px;color:#ededed;">7</span>
<span class="t" style="left:13.98px;top:561.00px;font-size:19px;letter-spacing:0.000px;color:#ededed;">8</span>
<span class="t" style="left:13.93px;top:590.00px;font-size:19px;letter-spacing:0.000px;color:#ededed;">9</span>
<span class="t" style="left:9.73px;top:618.00px;font-size:19.4px;letter-spacing:-0.164px;color:#ededed;">10</span>
<span class="t" style="left:9.73px;top:647.00px;font-size:19.4px;letter-spacing:1.470px;color:#ededed;">11</span>
<span class="t" style="left:9.73px;top:676.00px;font-size:19.4px;letter-spacing:0.069px;color:#ededed;">12</span>
<span class="t" style="left:9.73px;top:705.00px;font-size:19.4px;letter-spacing:-0.067px;color:#ededed;">13</span>
<span class="t" style="left:9.73px;top:734.00px;font-size:19.4px;letter-spacing:-0.339px;color:#ededed;">14</span>
<span class="t" style="left:9.73px;top:763.00px;font-size:19.4px;letter-spacing:-0.106px;color:#ededed;">15</span>
<span class="t" style="left:9.73px;top:792.00px;font-size:19.4px;letter-spacing:-0.067px;color:#ededed;">16</span>
<span class="t" style="left:9.73px;top:821.00px;font-size:19.4px;letter-spacing:0.069px;color:#ededed;">17</span>
<span class="t" style="left:9.73px;top:850.00px;font-size:19.4px;letter-spacing:-0.067px;color:#ededed;">18</span>
<span class="t" style="left:9.73px;top:879.00px;font-size:19.4px;letter-spacing:0.010px;color:#ededed;">19</span>
<span class="t" style="left:9.43px;top:908.00px;font-size:19.4px;letter-spacing:0.131px;color:#ededed;">20</span>
<span class="t" style="left:9.43px;top:937.00px;font-size:19.4px;letter-spacing:0.325px;color:#ededed;">21</span>
<span class="t" style="left:9.43px;top:966.00px;font-size:19.4px;letter-spacing:0.364px;color:#ededed;">22</span>
<span class="t" style="left:42.99px;top:358.00px;font-size:18.4px;letter-spacing:0.276px;color:#111;-webkit-text-stroke:0.45px #111;">Region</span>
<span class="t" style="left:215.09px;top:358.00px;font-size:18.4px;letter-spacing:0.995px;color:#111;-webkit-text-stroke:0.45px #111;">Northeast</span>
<span class="t" style="left:215.01px;top:415.00px;font-size:19.2px;letter-spacing:-0.113px;color:#111;font-weight:bold;-webkit-text-stroke:0;">Column Labels</span>
<span class="t" style="left:215.33px;top:444.00px;font-size:19.2px;letter-spacing:-0.446px;color:#111;font-weight:bold;-webkit-text-stroke:0;">Keyboard</span>
<span class="t" style="left:43.16px;top:473.00px;font-size:19.2px;letter-spacing:-0.233px;color:#111;font-weight:bold;-webkit-text-stroke:0;">Sum of Units Sold</span>
<span class="t" style="left:324.95px;top:473.00px;font-size:19.2px;letter-spacing:0.233px;color:#111;font-weight:bold;-webkit-text-stroke:0;">21450</span>
<div style="position:absolute;left:358px;top:355.5px;width:25px;height:24px;background:#ecf4f9;border:1px solid #b4c2ca"></div>
<svg style="left:362px;top:362px;" width="17" height="11.5" viewBox="0 0 17 11.5"><path d="M4.500 0.5 H16 L11.800 5.200 V10.5 L8.700 9 V5.200 Z" fill="#444"/><path d="M0.5 7.500 H6.500 L3.500 10.800 Z" fill="#444"/></svg>
<div style="position:absolute;left:358px;top:414px;width:25px;height:24px;background:#ecf4f9;border:1px solid #b4c2ca"></div>
<svg style="left:366px;top:423.5px;" width="9" height="5.5" viewBox="0 0 9 5.5"><path d="M0.3 0.5 H8.700 L4.500 5 Z" fill="#555"/></svg>
<div style="position:absolute;left:383.5px;top:411.2px;width:334.3px;height:2.5px;background:#bfe9dd"></div>
<div style="position:absolute;left:1367.5px;top:325px;width:25px;height:675px;background:#3e3e3e;border-radius:12.5px"></div>
<svg style="left:1373px;top:332px;" width="14.5" height="10" viewBox="0 0 14.5 10"><path d="M7.250 1.200 L13.300 8.800 H1.200 Z" fill="#cfcfcf" stroke="#cfcfcf" stroke-width="2" stroke-linejoin="round"/></svg>
<div style="position:absolute;left:1374.3px;top:350px;width:11.7px;height:602px;background:#c6c6c6;border-radius:6px"></div>
<svg style="left:1373px;top:983px;" width="14.5" height="10" viewBox="0 0 14.5 10"><path d="M7.250 8.800 L13.300 1.200 H1.200 Z" fill="#cfcfcf" stroke="#cfcfcf" stroke-width="2" stroke-linejoin="round"/></svg>
</div>
<!-- p_pane -->
<div id="pane">
<div style="position:absolute;left:1395px;top:326px;width:1px;height:698px;background:#4a4a4a"></div>
<span class="t" style="left:1412.39px;top:344.00px;font-size:21.4px;letter-spacing:-0.527px;color:#ffffff;font-weight:bold;-webkit-text-stroke:0;-webkit-text-stroke:0.2px #555;">PivotTable Fields</span>
<svg style="left:1829.5px;top:350.5px;" width="19.5" height="10.5" viewBox="0 0 19.5 10.5"><path d="M0.7 0.7 L9.750 9.700 L18.800 0.7" fill="none" stroke="#f2f2f2" stroke-width="1.5"/></svg>
<svg style="left:1880.5px;top:347.5px;" width="15.5" height="15.5" viewBox="0 0 15.5 15.5"><path d="M0.7 0.7 L14.800 14.800 M14.800 0.7 L0.7 14.800" stroke="#f2f2f2" stroke-width="1.5"/></svg>
<span class="t" style="left:1415.42px;top:395.00px;font-size:17.6px;letter-spacing:0.353px;color:#ffffff;">Choose fields to add to report:</span>
<div style="position:absolute;left:1837.5px;top:384px;width:65.2px;height:39px;background:#bdbdbd"></div>
<svg style="left:1850.8px;top:392px;" width="23" height="23" viewBox="0 0 23 23"><path d="M9.66 0.45 L13.34 0.45 L13.75 3.51 L15.56 4.26 L18.01 2.39 L20.61 4.99 L18.74 7.44 L19.49 9.25 L22.55 9.66 L22.55 13.34 L19.49 13.75 L18.74 15.56 L20.61 18.01 L18.01 20.61 L15.56 18.74 L13.75 19.49 L13.34 22.55 L9.66 22.55 L9.25 19.49 L7.44 18.74 L4.99 20.61 L2.39 18.01 L4.26 15.56 L3.51 13.75 L0.45 13.34 L0.45 9.66 L3.51 9.25 L4.26 7.44 L2.39 4.99 L4.99 2.39 L7.44 4.26 L9.25 3.51 Z" fill="none" stroke="#2a2a2a" stroke-width="1.5" stroke-linejoin="round"/><circle cx="11.5" cy="11.5" r="3.900" fill="none" stroke="#2a2a2a" stroke-width="1.5"/></svg>
<svg style="left:1886.5px;top:401.5px;" width="8" height="4.6" viewBox="0 0 8 4.6"><path d="M0.6 0.6 L4 4 L7.4 0.6" fill="none" stroke="#222" stroke-width="1.5" stroke-linecap="round" stroke-linejoin="round"/></svg>
<div style="position:absolute;left:1415.6px;top:444.5px;width:487.1px;height:35.2px;background:#bdbdbd"></div>
<span class="t" style="left:1423.63px;top:452.50px;font-size:17px;letter-spacing:-0.302px;color:#4f4f4f;">Search</span>
<svg style="left:1875.3px;top:450px;" width="23" height="23" viewBox="0 0 23 23"><circle cx="14.800" cy="8.200" r="7" fill="none" stroke="#2d2d2d" stroke-width="1.5"/><path d="M9.800 13.200 L1 22" stroke="#2d2d2d" stroke-width="1.5" stroke-linecap="round"/></svg>
<div style="position:absolute;left:1415.6px;top:505.4px;width:460.4px;height:175.9px;background:#bfbfbf"></div>
<div style="position:absolute;left:1876.5px;top:505.4px;width:25.5px;height:175.9px;background:#3f3f3f"></div>
<svg style="left:1882px;top:514.5px;" width="14" height="9.5" viewBox="0 0 14 9.5"><path d="M7 1.200 L12.800 8.300 H1.200 Z" fill="#d0d0d0" stroke="#d0d0d0" stroke-width="1.6" stroke-linejoin="round"/></svg>
<div style="position:absolute;left:1883px;top:548px;width:12px;height:106px;background:#c9c9c9"></div>
<svg style="left:1882px;top:663.5px;" width="14" height="9.5" viewBox="0 0 14 9.5"><path d="M7 8.300 L12.800 1.200 H1.200 Z" fill="#d0d0d0" stroke="#d0d0d0" stroke-width="1.6" stroke-linejoin="round"/></svg>
<div style="position:absolute;left:1421.6px;top:517.7px;width:19.4px;height:19.4px;background:#5cbd86"></div>
<svg style="left:1425px;top:522.7px;" width="13" height="10" viewBox="0 0 13 10"><path d="M1 5.200 L4.600 8.800 L12 1.200" fill="none" stroke="#173d29" stroke-width="1.6"/></svg>
<span class="t" style="left:1449.34px;top:522.00px;font-size:17.6px;letter-spacing:0.002px;color:#1c1c1c;font-weight:bold;-webkit-text-stroke:0;">Region</span>
<div style="position:absolute;left:1421.6px;top:550.3px;width:19.4px;height:19.4px;background:#5cbd86"></div>
<svg style="left:1425px;top:555.3px;" width="13" height="10" viewBox="0 0 13 10"><path d="M1 5.200 L4.600 8.800 L12 1.200" fill="none" stroke="#173d29" stroke-width="1.6"/></svg>
<span class="t" style="left:1449.34px;top:555.00px;font-size:17.6px;letter-spacing:-0.053px;color:#1c1c1c;font-weight:bold;-webkit-text-stroke:0;">Product</span>
<div style="position:absolute;left:1421.6px;top:582.9px;width:19.4px;height:19.4px;background:#5cbd86"></div>
<svg style="left:1425px;top:587.9px;" width="13" height="10" viewBox="0 0 13 10"><path d="M1 5.200 L4.600 8.800 L12 1.200" fill="none" stroke="#173d29" stroke-width="1.6"/></svg>
<span class="t" style="left:1449.44px;top:588.00px;font-size:17.6px;letter-spacing:-0.112px;color:#1c1c1c;font-weight:bold;-webkit-text-stroke:0;">Units Sold</span>
<div style="position:absolute;left:1421.6px;top:615.5px;width:19.4px;height:19.4px;background:#c3c3c3;border:1px solid #7e7e7e"></div>
<span class="t" style="left:1449.06px;top:621.00px;font-size:17.6px;letter-spacing:-0.492px;color:#1c1c1c;">Revenue ($)</span>
<span class="t" style="left:1419.17px;top:655.00px;font-size:17.4px;letter-spacing:0.057px;color:#1c1c1c;">More Tables...</span>
<svg style="left:1852.4px;top:521.5px;" width="18.5" height="18.5" viewBox="0 0 18.5 18.5"><path d="M1 1 H17.500 L11.300 8.500 V17.500 L7.200 14.500 V8.500 Z" fill="#f4f4f4" stroke="#3c3c3c" stroke-width="1.300" stroke-linejoin="round"/></svg>
<span class="t" style="left:1419.66px;top:715.00px;font-size:17.6px;letter-spacing:0.058px;color:#ffffff;">Drag fields between areas below:</span>
<div style="position:absolute;left:1660px;top:766px;width:1px;height:202px;background:#626262"></div>
<div style="position:absolute;left:1424px;top:864px;width:479px;height:1px;background:#626262"></div>
<svg style="left:1425px;top:764.7px;" width="18.5" height="17.5" viewBox="0 0 18.5 17.5"><path d="M0.5 0.5 H18 L11.500 8 V17 L7 14 V8 Z" fill="#f5f5f5"/></svg>
<span class="t" style="left:1452.36px;top:767.00px;font-size:17.6px;letter-spacing:-0.306px;color:#ffffff;">Filters</span>
<svg style="left:1671.5px;top:765.5px;" width="15" height="15.5" viewBox="0 0 15 15.5"><path d="M1.500 0 V15.500 M5 0 V15.500 M8.500 0 V15.500 M11.500 0 V15.500 M14.300 0 V15.500" stroke="#f0f0f0" stroke-width="1.5"/><path d="M1.500 0 V15.500" stroke="#f0f0f0" stroke-width="3"/></svg>
<span class="t" style="left:1697.42px;top:767.00px;font-size:17.6px;letter-spacing:0.078px;color:#ffffff;">Columns</span>
<svg style="left:1425px;top:878.5px;" width="16.5" height="14" viewBox="0 0 16.5 14"><path d="M0 1.500 H16.500" stroke="#f0f0f0" stroke-width="3"/><path d="M0 5.500 H16.500 M0 9 H16.500 M0 12.500 H16.500" stroke="#f0f0f0" stroke-width="1.4"/></svg>
<span class="t" style="left:1452.36px;top:879.00px;font-size:17.6px;letter-spacing:-0.277px;color:#ffffff;">Rows</span>
<span class="t" style="left:1671px;top:873px;font-family:'Liberation Serif',serif;font-size:24px;color:#f5f5f5;font-weight:bold">&Sigma;</span>
<span class="t" style="left:1698.23px;top:879.00px;font-size:17.6px;letter-spacing:-0.441px;color:#ffffff;">Values</span>
<div style="position:absolute;left:1418.8px;top:794px;width:232.2px;height:61px;background:#bfbfbf"></div>
<div style="position:absolute;left:1418.8px;top:906px;width:232.2px;height:61px;background:#bfbfbf"></div>
<div style="position:absolute;left:1664px;top:794px;width:239.3px;height:61px;background:#bfbfbf"></div>
<div style="position:absolute;left:1664px;top:906px;width:239.3px;height:61px;background:#bfbfbf"></div>
<div style="position:absolute;left:1420.3px;top:797.2px;width:229.2px;height:34.3px;background:#c4c4c4;border:1px solid #707070"></div>
<span class="t" style="left:1431.56px;top:806.00px;font-size:17.6px;letter-spacing:0.140px;color:#1c1c1c;">Region</span>
<svg style="left:1627.9px;top:812.7px;" width="8.3" height="4.7" viewBox="0 0 8.3 4.7"><path d="M0.6 0.6 L4.15 4.1 L7.7 0.6" fill="none" stroke="#222" stroke-width="1.5" stroke-linecap="round" stroke-linejoin="round"/></svg>
<div style="position:absolute;left:1665.5px;top:797.2px;width:236.5px;height:34.3px;background:#c4c4c4;border:1px solid #707070"></div>
<span class="t" style="left:1676.36px;top:806.00px;font-size:17.6px;letter-spacing:0.151px;color:#1c1c1c;">Product</span>
<svg style="left:1879.9px;top:812.7px;" width="8.3" height="4.7" viewBox="0 0 8.3 4.7"><path d="M0.6 0.6 L4.15 4.1 L7.7 0.6" fill="none" stroke="#222" stroke-width="1.5" stroke-linecap="round" stroke-linejoin="round"/></svg>
<div style="position:absolute;left:1665.5px;top:909.5px;width:236.5px;height:34px;background:#c4c4c4;border:1px solid #707070"></div>
<span class="t" style="left:1676.21px;top:918.00px;font-size:17.6px;letter-spacing:0.241px;color:#1c1c1c;">Sum of Units Sold</span>
<svg style="left:1879.9px;top:925px;" width="8.3" height="4.7" viewBox="0 0 8.3 4.7"><path d="M0.6 0.6 L4.15 4.1 L7.7 0.6" fill="none" stroke="#222" stroke-width="1.5" stroke-linecap="round" stroke-linejoin="round"/></svg>
<div style="position:absolute;left:1423.2px;top:1005.9px;width:19.1px;height:18.6px;background:#bdbdbd;border:1px solid #a5a5a5"></div>
<span class="t" style="left:1453.26px;top:1006.00px;font-size:17.6px;letter-spacing:0.050px;color:#ffffff;">Defer Layout Update</span>
</div>
<!-- p_status -->
<div id="sheetbar">
<svg style="left:35px;top:1013px;" width="8.5" height="15" viewBox="0 0 8.5 15"><path d="M7.500 1 L1.200 7.500 L7.500 14" fill="none" stroke="#9a9a9a" stroke-width="1.6"/></svg>
<svg style="left:84px;top:1013px;" width="8.5" height="15" viewBox="0 0 8.5 15"><path d="M1 1 L7.300 7.500 L1 14" fill="none" stroke="#9a9a9a" stroke-width="1.6"/></svg>
<div style="position:absolute;left:165.5px;top:997.5px;width:90.3px;height:42.7px;background:#ffffff;border-radius:0 0 7px 7px"></div>
<div style="position:absolute;left:159.5px;top:997.5px;width:6px;height:6px;background:radial-gradient(circle at 0 100%,#535353 5.700px,#ffffff 6.300px)"></div>
<div style="position:absolute;left:255.8px;top:997.5px;width:6px;height:6px;background:radial-gradient(circle at 100% 100%,#535353 5.700px,#ffffff 6.300px)"></div>
<div style="position:absolute;left:261px;top:1008px;width:1px;height:29px;background:#6a6a6a"></div>
<span class="t" style="left:177.68px;top:1008.00px;font-size:20.4px;letter-spacing:0.108px;color:#1a1a1a;">Sheet3</span>
<div style="position:absolute;left:178.5px;top:1032.5px;width:64.5px;height:3px;background:#1e6e46;border-radius:1.5px"></div>
<span class="t" style="left:279.69px;top:1013.00px;font-size:20.2px;letter-spacing:-0.308px;color:#ffffff;">Sheet1</span>
<div style="position:absolute;left:360px;top:1008px;width:1px;height:29px;background:#6a6a6a"></div>
<div style="position:absolute;left:840.2px;top:1014.7px;width:3.3px;height:3.2px;background:#dcdcdc"></div>
<div style="position:absolute;left:840.2px;top:1021.2px;width:3.3px;height:3.2px;background:#dcdcdc"></div>
<div style="position:absolute;left:840.2px;top:1027.7px;width:3.3px;height:3.2px;background:#dcdcdc"></div>
<div style="position:absolute;left:866.5px;top:1008px;width:497px;height:25.5px;background:#3c3c3c;border-radius:12.5px"></div>
<svg style="left:873.5px;top:1014px;" width="11" height="14.5" viewBox="0 0 11 14.5"><path d="M1.200 7.250 L9.500 1.200 V13.300 Z" fill="#d0d0d0" stroke="#d0d0d0" stroke-width="1.6" stroke-linejoin="round"/></svg>
<div style="position:absolute;left:892px;top:1015px;width:439.5px;height:12px;background:#c8c7c8;border-radius:6px"></div>
<svg style="left:1349px;top:1014px;" width="11" height="14.5" viewBox="0 0 11 14.5"><path d="M9.800 7.250 L1.500 1.200 V13.300 Z" fill="#d0d0d0" stroke="#d0d0d0" stroke-width="1.6" stroke-linejoin="round"/></svg>
</div>
<div id="statusbar">
<div style="position:absolute;left:0px;top:1045.5px;width:1920px;height:1px;background:#444444"></div>
<div style="position:absolute;left:0px;top:1046.5px;width:1920px;height:32.5px;background:#535353"></div>
<div style="position:absolute;left:0px;top:1078.7px;width:1920px;height:1.3px;background:#f4f4f4"></div>
<span class="t" style="left:16.22px;top:1055.00px;font-size:15.6px;letter-spacing:-0.871px;color:#ffffff;">Ready</span>
<svg style="left:88.5px;top:1052px;" width="22" height="22" viewBox="0 0 22 22"><circle cx="10" cy="3.500" r="2.600" fill="none" stroke="#f4f4f4" stroke-width="1.4"/>
<path d="M1.500 4.500 L7 8.500 H13 L18.500 4.500 M7 8.500 L7.500 13 L4 20.500 M13 8.500 L12.500 13 L14 16" fill="none" stroke="#f4f4f4" stroke-width="1.5" stroke-linecap="round" stroke-linejoin="round"/>
<path d="M13.500 14.500 L21 21.500 M21 14.500 L13.500 21.500" stroke="#f4f4f4" stroke-width="1.5"/></svg>
<span class="t" style="left:114.63px;top:1055.00px;font-size:15.6px;letter-spacing:0.072px;color:#ffffff;font-weight:bold;-webkit-text-stroke:0;">Accessibility: Investigate</span>
<div style="position:absolute;left:1477.5px;top:1047px;width:56px;height:31.5px;background:#5d5d5d"></div>
<svg style="left:1493px;top:1052px;" width="20" height="20" viewBox="0 0 20 20"><rect x="1" y="1" width="18" height="18" fill="none" stroke="#f4f4f4" stroke-width="2"/><path d="M1 7 H19 M1 13 H19 M7 1 V19 M13 1 V19" stroke="#f4f4f4" stroke-width="2"/></svg>
<svg style="left:1553px;top:1052px;" width="22" height="20" viewBox="0 0 22 20"><rect x="1" y="1" width="20" height="18" fill="none" stroke="#f4f4f4" stroke-width="1.6"/><rect x="5.500" y="4.500" width="11" height="11" fill="none" stroke="#f4f4f4" stroke-width="1.4"/><path d="M8 8 H14 M8 10.500 H14 M8 13 H14" stroke="#f4f4f4" stroke-width="1.2"/></svg>
<svg style="left:1613px;top:1052px;" width="22" height="20" viewBox="0 0 22 20"><rect x="1" y="1" width="20" height="18" fill="none" stroke="#f4f4f4" stroke-width="1.6"/><path d="M1 11.500 H14 V1 M7.500 1 V11.500" fill="none" stroke="#f4f4f4" stroke-width="1.6"/></svg>
<div style="position:absolute;left:1661.5px;top:1061.8px;width:12px;height:1.7px;background:#e6e6e6"></div>
<div style="position:absolute;left:1681.5px;top:1061.5px;width:148px;height:2.2px;background:#cfcfcf"></div>
<div style="position:absolute;left:1752.5px;top:1053.5px;width:7.3px;height:17.5px;background:#d2d2d2"></div>
<div style="position:absolute;left:1837.5px;top:1061.8px;width:12.5px;height:1.7px;background:#e6e6e6"></div>
<div style="position:absolute;left:1842.9px;top:1056.3px;width:1.7px;height:12.7px;background:#e6e6e6"></div>
<span class="t" style="left:1868.61px;top:1055.00px;font-size:15.6px;letter-spacing:-0.255px;color:#ffffff;">100%</span>
</div>
<!-- p_menu -->
<div id="menu">
<div style="position:absolute;left:384px;top:414px;width:400px;height:648.5px;background:#bfbfbf;border:1.700px solid #5a5a5a;border-radius:5px 5px 3px 3px;box-shadow:0 5px 6px -1px rgba(0,0,0,.28)"></div>
<span class="t" style="left:401.5px;top:420.5px;font-size:13.5px;font-weight:bold;color:#1e5f9e;line-height:1">A</span>
<span class="t" style="left:401.5px;top:432.5px;font-size:13.5px;font-weight:bold;color:#444;line-height:1">Z</span>
<svg style="left:414.5px;top:424px;" width="12" height="24" viewBox="0 0 12 24"><path d="M6 0.5 V22 M1 17 L6 22.500 L11 17" fill="none" stroke="#3a3a3a" stroke-width="1.5"/></svg>
<span class="t" style="left:437.51px;top:426.00px;font-size:17.6px;letter-spacing:0.526px;color:#1e1e1e;"><u>S</u>ort A to Z</span>
<span class="t" style="left:401.5px;top:464.5px;font-size:13.5px;font-weight:bold;color:#444;line-height:1">Z</span>
<span class="t" style="left:401.5px;top:476.5px;font-size:13.5px;font-weight:bold;color:#1e5f9e;line-height:1">A</span>
<svg style="left:414.5px;top:468px;" width="12" height="24" viewBox="0 0 12 24"><path d="M6 0.5 V22 M1 17 L6 22.500 L11 17" fill="none" stroke="#3a3a3a" stroke-width="1.5"/></svg>
<span class="t" style="left:437.51px;top:470.00px;font-size:17.6px;letter-spacing:0.308px;color:#1e1e1e;">S<u>o</u>rt Z to A</span>
<span class="t" style="left:437.66px;top:514.00px;font-size:17.6px;letter-spacing:0.219px;color:#1e1e1e;"><u>M</u>ore Sort Options...</span>
<div style="position:absolute;left:432px;top:546.5px;width:350.5px;height:1px;background:#8c8c8c"></div>
<svg style="left:401.5px;top:559px;" width="26" height="24" viewBox="0 0 26 24"><path d="M1 1 H23.500 L14.500 11 V20 L10 17.500 V11 Z" fill="none" stroke="#e2e2e2" stroke-width="1.6" stroke-linejoin="round"/><path d="M15.500 15.500 L22.500 22.500 M22.500 15.500 L15.500 22.500" stroke="#d6d6d6" stroke-width="1.6"/></svg>
<span class="t" style="left:437.42px;top:560.50px;font-size:17.6px;letter-spacing:-0.009px;color:#8c8c8c;"><u>C</u>lear Filter From &quot;Product&quot;</span>
<span class="t" style="left:437.66px;top:604.50px;font-size:17.6px;letter-spacing:-0.366px;color:#1e1e1e;"><u>L</u>abel Filters</span>
<svg style="left:762.5px;top:607px;" width="8.5" height="14" viewBox="0 0 8.5 14"><path d="M1 0.7 L7.500 7 L1 13.300" fill="none" stroke="#2b2b2b" stroke-width="1.5"/></svg>
<span class="t" style="left:438.23px;top:649.00px;font-size:17.6px;letter-spacing:-0.384px;color:#1e1e1e;"><u>V</u>alue Filters</span>
<svg style="left:762.5px;top:651px;" width="8.5" height="14" viewBox="0 0 8.5 14"><path d="M1 0.7 L7.500 7 L1 13.300" fill="none" stroke="#2b2b2b" stroke-width="1.5"/></svg>
<div style="position:absolute;left:432px;top:682px;width:350.5px;height:1px;background:#8c8c8c"></div>
<div style="position:absolute;left:429.2px;top:690.5px;width:344.8px;height:33px;background:#bdbdbd;border:1px solid #7c7c7c"></div>
<span class="t" style="left:437.61px;top:698.50px;font-size:15.4px;letter-spacing:-0.383px;color:#555;">Search</span>
<div style="position:absolute;left:429.2px;top:729.3px;width:344.8px;height:253.7px;background:#ffffff;border:1px solid #8a8a8a"></div>
<div style="position:absolute;left:441.5px;top:744px;width:1px;height:113px;background:repeating-linear-gradient(to bottom,#9a9a9a 0 1px,transparent 1px 2px)"></div>
<div style="position:absolute;left:442px;top:743.3px;width:10px;height:1px;background:repeating-linear-gradient(to right,#9a9a9a 0 1px,transparent 1px 2px)"></div>
<div style="position:absolute;left:452.2px;top:734.8px;width:16px;height:16.2px;background:#fff;border:1.2px solid #333"></div>
<svg style="left:455px;top:738.3px;" width="11" height="9.5" viewBox="0 0 11 9.5"><path d="M1.200 4.800 L4.200 7.800 L9.800 1.200" fill="none" stroke="#111" stroke-width="2"/></svg>
<span class="t" style="left:472.31px;top:734.00px;font-size:17.6px;letter-spacing:-0.294px;color:#1a1a1a;">(Select All)</span>
<div style="position:absolute;left:442px;top:771.35px;width:10px;height:1px;background:repeating-linear-gradient(to right,#9a9a9a 0 1px,transparent 1px 2px)"></div>
<div style="position:absolute;left:452.2px;top:762.85px;width:16px;height:16.2px;background:#fff;border:1.2px solid #333"></div>
<svg style="left:455px;top:766.35px;" width="11" height="9.5" viewBox="0 0 11 9.5"><path d="M1.200 4.800 L4.200 7.800 L9.800 1.200" fill="none" stroke="#111" stroke-width="2"/></svg>
<span class="t" style="left:471.96px;top:762.00px;font-size:17.6px;letter-spacing:0.047px;color:#1a1a1a;">Keyboard</span>
<div style="position:absolute;left:442px;top:799.4px;width:10px;height:1px;background:repeating-linear-gradient(to right,#9a9a9a 0 1px,transparent 1px 2px)"></div>
<div style="position:absolute;left:452.2px;top:790.9px;width:16px;height:16.2px;background:#fff;border:1.2px solid #333"></div>
<svg style="left:455px;top:794.4px;" width="11" height="9.5" viewBox="0 0 11 9.5"><path d="M1.200 4.800 L4.200 7.800 L9.800 1.200" fill="none" stroke="#111" stroke-width="2"/></svg>
<span class="t" style="left:471.96px;top:790.00px;font-size:17.6px;letter-spacing:0.367px;color:#1a1a1a;">Laptop</span>
<div style="position:absolute;left:442px;top:827.45px;width:10px;height:1px;background:repeating-linear-gradient(to right,#9a9a9a 0 1px,transparent 1px 2px)"></div>
<div style="position:absolute;left:452.2px;top:818.95px;width:16px;height:16.2px;background:#fff;border:1.2px solid #333"></div>
<svg style="left:455px;top:822.45px;" width="11" height="9.5" viewBox="0 0 11 9.5"><path d="M1.200 4.800 L4.200 7.800 L9.800 1.200" fill="none" stroke="#111" stroke-width="2"/></svg>
<span class="t" style="left:471.96px;top:819.00px;font-size:17.6px;letter-spacing:0.790px;color:#1a1a1a;">Monitor</span>
<div style="position:absolute;left:442px;top:855.5px;width:10px;height:1px;background:repeating-linear-gradient(to right,#9a9a9a 0 1px,transparent 1px 2px)"></div>
<div style="position:absolute;left:452.2px;top:847px;width:16px;height:16.2px;background:#fff;border:1.2px solid #333"></div>
<svg style="left:455px;top:850.5px;" width="11" height="9.5" viewBox="0 0 11 9.5"><path d="M1.200 4.800 L4.200 7.800 L9.800 1.200" fill="none" stroke="#111" stroke-width="2"/></svg>
<span class="t" style="left:471.96px;top:847.00px;font-size:17.6px;letter-spacing:0.274px;color:#1a1a1a;">Mouse</span>
<div style="position:absolute;left:635.3px;top:1007.2px;width:48.5px;height:34.4px;border:2px solid #161616;border-radius:6px;background:#c1c1c1"></div>
<span class="t" style="left:647.17px;top:1015.00px;font-size:17.6px;letter-spacing:-1.408px;color:#1e1e1e;">OK</span>
<div style="position:absolute;left:698.3px;top:1007.2px;width:75.5px;height:34.4px;border:1px solid #858585;border-radius:5px;background:#c1c1c1"></div>
<span class="t" style="left:709.62px;top:1015.00px;font-size:17.6px;letter-spacing:-0.548px;color:#1e1e1e;">Cancel</span>
<div style="position:absolute;left:775px;top:1056px;width:2px;height:2px;background:#9d9d9d"></div>
<div style="position:absolute;left:771.5px;top:1056px;width:2px;height:2px;background:#9d9d9d"></div>
<div style="position:absolute;left:775px;top:1052.5px;width:2px;height:2px;background:#9d9d9d"></div>
</div>
</div>
</body>
</html>
